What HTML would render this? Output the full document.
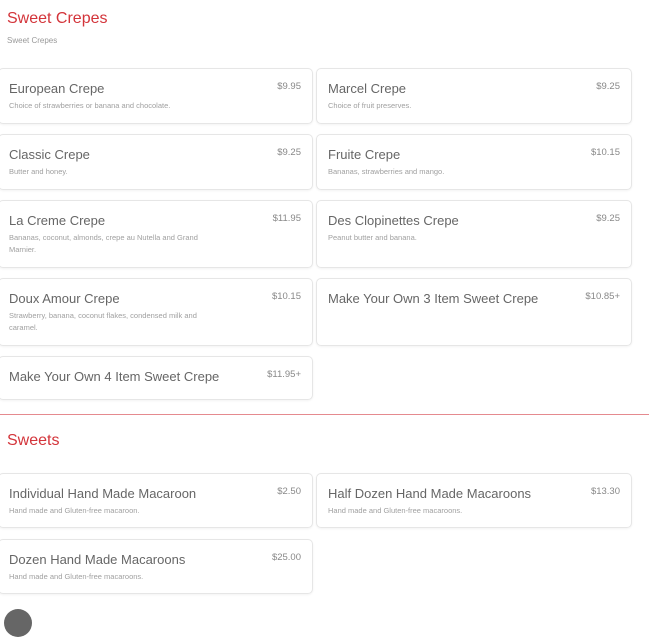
<!DOCTYPE html>
<html><head><style>
body{margin:0;width:649px;height:616px;overflow:hidden;background:#fff;font-family:"Liberation Sans",sans-serif;position:relative}
.h{position:absolute;left:7px;color:#d3343a;font-size:16px}
.sub{position:absolute;left:7px;top:36px;font-size:8px;color:#999}
.c{position:absolute;border:1px solid #e6e6e6;border-radius:5px;box-sizing:border-box;box-shadow:0 1px 2px rgba(0,0,0,.05)}
.c .n{position:absolute;left:10px;top:12px;font-size:13px;color:#666}
.c .p{position:absolute;right:11px;top:12px;font-size:9.5px;color:#888}
.c .d{position:absolute;left:10px;top:31px;font-size:7.5px;color:#a0a0a0;line-height:12px;width:200px}
.l{left:-2px;width:315px}.r{left:316px;width:316px}
.r .n,.r .d{left:11px}
</style></head><body>
<div class="h" style="top:10px">Sweet Crepes</div>
<div class="sub">Sweet Crepes</div>
<div class="c l" style="top:68px;height:56px"><div class="n">European Crepe</div><div class="p">$9.95</div><div class="d">Choice of strawberries or banana and chocolate.</div></div>
<div class="c r" style="top:68px;height:56px"><div class="n">Marcel Crepe</div><div class="p">$9.25</div><div class="d">Choice of fruit preserves.</div></div>
<div class="c l" style="top:134px;height:56px"><div class="n">Classic Crepe</div><div class="p">$9.25</div><div class="d">Butter and honey.</div></div>
<div class="c r" style="top:134px;height:56px"><div class="n">Fruite Crepe</div><div class="p">$10.15</div><div class="d">Bananas, strawberries and mango.</div></div>
<div class="c l" style="top:200px;height:68px"><div class="n">La Creme Crepe</div><div class="p">$11.95</div><div class="d">Bananas, coconut, almonds, crepe au Nutella and Grand Marnier.</div></div>
<div class="c r" style="top:200px;height:68px"><div class="n">Des Clopinettes Crepe</div><div class="p">$9.25</div><div class="d">Peanut butter and banana.</div></div>
<div class="c l" style="top:278px;height:68px"><div class="n">Doux Amour Crepe</div><div class="p">$10.15</div><div class="d">Strawberry, banana, coconut flakes, condensed milk and caramel.</div></div>
<div class="c r" style="top:278px;height:68px"><div class="n">Make Your Own 3 Item Sweet Crepe</div><div class="p">$10.85+</div></div>
<div class="c l" style="top:356px;height:44px"><div class="n">Make Your Own 4 Item Sweet Crepe</div><div class="p">$11.95+</div></div>
<div style="position:absolute;left:0;top:414px;width:649px;height:1px;background:#e58a8f"></div>
<div class="h" style="top:432px">Sweets</div>
<div class="c l" style="top:473px;height:55px"><div class="n">Individual Hand Made Macaroon</div><div class="p">$2.50</div><div class="d">Hand made and Gluten-free macaroon.</div></div>
<div class="c r" style="top:473px;height:55px"><div class="n">Half Dozen Hand Made Macaroons</div><div class="p">$13.30</div><div class="d">Hand made and Gluten-free macaroons.</div></div>
<div class="c l" style="top:539px;height:55px"><div class="n">Dozen Hand Made Macaroons</div><div class="p">$25.00</div><div class="d">Hand made and Gluten-free macaroons.</div></div>
<div style="position:absolute;left:4px;top:609px;width:28px;height:28px;border-radius:50%;background:#666"></div>
</body></html>
